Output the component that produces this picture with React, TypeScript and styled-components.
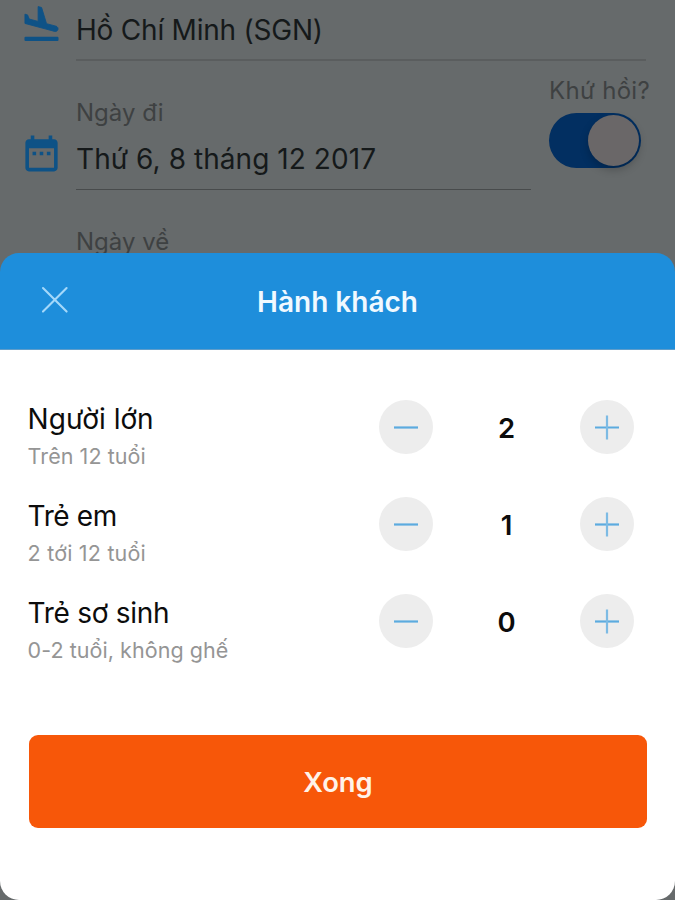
import React, { useState } from "react";
import styled, { createGlobalStyle } from "styled-components";

const GlobalStyle = createGlobalStyle`
  * { box-sizing: border-box; }
  html, body { margin: 0; padding: 0; background: #666a6b; }
  body { font-family: Inter, "Noto Sans", sans-serif; overflow: hidden; }
  button { font: inherit; border: 0; padding: 0; cursor: pointer; }
`;

const Screen = styled.main`
  position: relative;
  width: 675px;
  height: 900px;
  overflow: hidden;
  background: #666a6b;
`;

const Form = styled.section`
  display: flex;
  flex-direction: column;
`;

const FieldRow = styled.div<{ $height: number }>`
  display: flex;
  height: ${(p) => p.$height}px;
`;

const IconSlot = styled.div<{ $top: number }>`
  width: 76px;
  flex: none;
  padding: ${(p) => p.$top}px 0 0 20px;
  svg { display: block; fill: #0e5286; }
`;

const Field = styled.div<{ $width: number }>`
  width: ${(p) => p.$width}px;
  flex: none;
  border-bottom: 2px solid #5a5d5e;
  white-space: nowrap;
`;

const DateField = styled(Field)`
  border-bottom: 1px solid #484b4c;
`;

const Value = styled.div<{ $top: number; $spacing: number }>`
  margin-top: ${(p) => p.$top}px;
  font-size: 28px;
  line-height: 36px;
  letter-spacing: ${(p) => p.$spacing}px;
  color: #15191a;
`;

const Label = styled.div<{ $top: number; $spacing?: number }>`
  margin-top: ${(p) => p.$top}px;
  font-size: 24px;
  line-height: 32px;
  letter-spacing: ${(p) => p.$spacing ?? 0}px;
  color: #3e4142;
  white-space: nowrap;
`;

const RoundTrip = styled.div`
  margin-left: 18px;
`;

const Switch = styled.div`
  display: flex;
  justify-content: flex-end;
  align-items: center;
  width: 92px;
  height: 55px;
  margin-top: 6px;
  padding: 0 2px;
  border-radius: 28px;
  background: #022f61;
`;

const Knob = styled.span`
  width: 51px;
  height: 51px;
  border-radius: 50%;
  background: #6a6768;
  box-shadow: 0 4px 8px rgba(0, 0, 0, 0.22);
`;

const Indented = styled.div`
  padding-left: 76px;
`;

const Sheet = styled.section`
  position: absolute;
  inset: 253px 0 0;
  display: flex;
  flex-direction: column;
  overflow: hidden;
  border-radius: 19px;
  background: linear-gradient(#1e8edb 96px, #fff 96px);
`;

const SheetHeader = styled.header`
  display: grid;
  grid-template-columns: 109px 1fr 109px;
  align-items: center;
  height: 97px;
  flex: none;
  border-bottom: 1px solid #5f9dca;
`;

const CloseButton = styled.button`
  display: flex;
  justify-content: center;
  margin-top: -3px;
  background: none;
  svg { display: block; }
`;

const Title = styled.h1`
  margin: 2px 0 0;
  font-size: 28px;
  font-weight: 600;
  line-height: 36px;
  text-align: center;
  color: #f0f9ff;
`;

const Passengers = styled.div`
  display: flex;
  flex-direction: column;
  padding: 29px 41px 0 28px;
`;

const PassengerRow = styled.div`
  display: flex;
  justify-content: space-between;
  height: 97px;
  padding-top: 21.4px;
`;

const Description = styled.div`
  display: flex;
  flex-direction: column;
  padding-top: 0.4px;
  margin-left: -0.4px;
  white-space: nowrap;
`;

const Name = styled.div<{ $spacing: number }>`
  font-size: 28px;
  line-height: 36px;
  letter-spacing: ${(p) => p.$spacing}px;
  color: #0c0c0c;
`;

const Age = styled.div<{ $spacing: number }>`
  margin-top: 4px;
  font-size: 21.5px;
  line-height: 30px;
  letter-spacing: ${(p) => p.$spacing}px;
  color: #959595;
`;

const Stepper = styled.div`
  display: grid;
  grid-template-columns: 54px 147px 54px;
  align-items: center;
  height: 54px;
`;

const StepButton = styled.button`
  display: flex;
  align-items: center;
  justify-content: center;
  width: 54px;
  height: 54px;
  border-radius: 50%;
  background: #ededed;
`;

const Count = styled.output`
  margin-top: 2px;
  font-size: 27.5px;
  font-weight: 600;
  line-height: 36px;
  text-align: center;
  color: #0c0c0c;
`;

const DoneButton = styled.button`
  height: 93px;
  margin: 65px 28px 0 29px;
  border-radius: 9px;
  background: #f75709;
  color: #fff3e9;
  font-size: 27.4px;
  font-weight: 600;
  line-height: 36px;
`;

const LandingIcon = () => (
  <svg width="43" height="43" viewBox="0 0 24 24">
    <rect x="2.5" y="18.9" width="19" height="2.3" rx="0.6" />
    <path
      d="M9.68 13.27l4.35 1.16 5.31 1.42c.8.21 1.62-.26 1.84-1.06.21-.8-.26-1.62-1.06-1.84l-5.31-1.42-2.76-9.02L10.12 2v8.28L5.15 8.95l-.93-2.32-1.45-.39v5.17l1.6.43 5.31 1.43z"
      stroke="#0e5286"
      strokeWidth="0.5"
      strokeLinejoin="round"
    />
  </svg>
);

const CalendarIcon = () => (
  <svg width="43" height="43" viewBox="0 0 24 24">
    <path d="M9 11H7v2h2v-2zm4 0h-2v2h2v-2zm4 0h-2v2h2v-2zm2-7h-1V2h-2v2H8V2H6v2H5c-1.11 0-1.99.9-1.99 2L3 20c0 1.1.89 2 2 2h14c1.1 0 2-.9 2-2V6c0-1.1-.9-2-2-2zm0 16H5V9h14v11z" />
  </svg>
);

const CloseIcon = () => (
  <svg width="28" height="28" viewBox="0 0 28 28">
    <path d="M2 2L25.6 25.6M25.6 2L2 25.6" stroke="#a4d8fa" strokeWidth="2.1" strokeLinecap="round" />
  </svg>
);

const StepIcon = ({ plus }: { plus?: boolean }) => (
  <svg width="26" height="26" viewBox="0 0 26 26">
    <path d="M1 13.5H25" stroke="#5cabdf" strokeWidth="2.2" />
    {plus && <path d="M13 1.5V25.5" stroke="#7dbbe4" strokeWidth="2.2" />}
  </svg>
);

const groups = [
  { name: "Người lớn", age: "Trên 12 tuổi", count: 2, nameSpacing: 0, ageSpacing: 0.06 },
  { name: "Trẻ em", age: "2 tới 12 tuổi", count: 1, nameSpacing: -0.4, ageSpacing: 0.2 },
  { name: "Trẻ sơ sinh", age: "0-2 tuổi, không ghế", count: 0, nameSpacing: -0.28, ageSpacing: 0.05 },
];

export default function App() {
  const [counts, setCounts] = useState(groups.map((g) => g.count));
  const step = (index: number, delta: number) =>
    setCounts((all) => all.map((n, i) => (i === index ? Math.max(0, n + delta) : n)));

  return (
    <>
      <GlobalStyle />
      <Screen>
        <Form>
          <FieldRow $height={61}>
            <IconSlot $top={3}><LandingIcon /></IconSlot>
            <Field $width={570}>
              <Value $top={12} $spacing={-0.22}>Hồ Chí Minh (SGN)</Value>
            </Field>
          </FieldRow>
          <FieldRow $height={129}>
            <IconSlot $top={71.4}><CalendarIcon /></IconSlot>
            <DateField $width={455}>
              <Label $top={36}>Ngày đi</Label>
              <Value $top={12} $spacing={0.06}>Thứ 6, 8 tháng 12 2017</Value>
            </DateField>
            <RoundTrip>
              <Label $top={14} $spacing={0.3}>Khứ hồi?</Label>
              <Switch><Knob /></Switch>
            </RoundTrip>
          </FieldRow>
          <Indented>
            <Label $top={36}>Ngày về</Label>
          </Indented>
        </Form>
        <Sheet>
          <SheetHeader>
            <CloseButton aria-label="Đóng"><CloseIcon /></CloseButton>
            <Title>Hành khách</Title>
          </SheetHeader>
          <Passengers>
            {groups.map((group, i) => (
              <PassengerRow key={group.name}>
                <Description>
                  <Name $spacing={group.nameSpacing}>{group.name}</Name>
                  <Age $spacing={group.ageSpacing}>{group.age}</Age>
                </Description>
                <Stepper>
                  <StepButton onClick={() => step(i, -1)}><StepIcon /></StepButton>
                  <Count>{counts[i]}</Count>
                  <StepButton onClick={() => step(i, 1)}><StepIcon plus /></StepButton>
                </Stepper>
              </PassengerRow>
            ))}
          </Passengers>
          <DoneButton>Xong</DoneButton>
        </Sheet>
      </Screen>
    </>
  );
}
